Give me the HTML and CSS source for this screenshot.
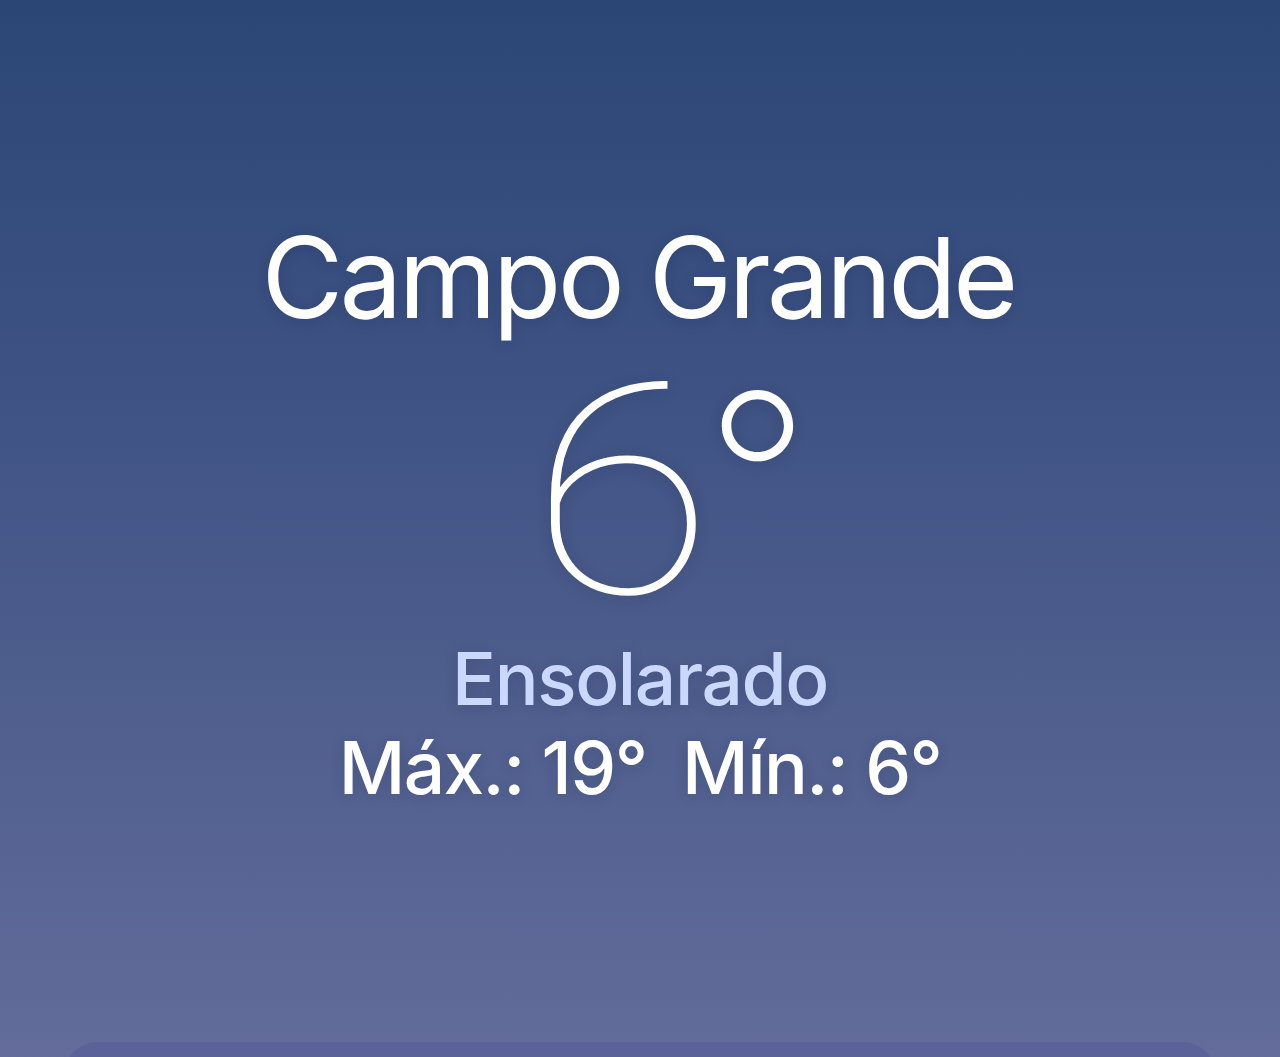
FILE: index.html
```html
<!DOCTYPE html>
<html lang="pt-BR">
<head>
    <meta charset="UTF-8">
    <meta name="viewport" content="width=device-width, initial-scale=1.0">
    <title>Tempo - Campo Grande</title>
    <link rel="stylesheet" href="styles.css">
</head>
<body>
    <div class="screen">
        <header class="current">
            <h1 class="city">Campo Grande</h1>
            <div class="temp"><span class="digits">6</span><span class="deg">°</span></div>
            <div class="condition">Ensolarado</div>
            <div class="hilo">Máx.: 19°&nbsp; Mín.: 6°</div>
        </header>

        <section class="card"></section>
    </div>
</body>
</html>
```

FILE: styles.css
```css
body { margin: 0; font-family: Inter, "Noto Sans", sans-serif; color: #fff; background: #2b4675; }
.screen { height: 1057px; overflow: hidden; display: flex; flex-direction: column; align-items: center; background: linear-gradient(180deg, #2b4675 0%, #3d5283 35%, #51608f 70%, #636c9b 100%); }
.current { display: flex; flex-direction: column; align-items: center; padding-top: 221px; text-shadow: 0 2px 14px rgba(20, 30, 60, 0.18); }
.city { margin: 0; font-size: 112px; font-weight: 400; line-height: 1; letter-spacing: -3.8px; padding-right: 4px; }
.temp { margin-top: 13px; display: flex; align-items: flex-start; padding-left: 60px; }
.digits { display: inline-block; font-family: Roboto, sans-serif; font-size: 294px; font-weight: 100; line-height: 1; transform: scaleX(1.14); transform-origin: left center; margin-right: 18px; }
.deg { margin-top: 15px; margin-left: -4px; font-size: 232px; font-weight: 220; line-height: 1; }
.condition { margin-top: 2px; font-size: 73px; font-weight: 500; line-height: 1; letter-spacing: -1.4px; color: #c9d8fb; }
.hilo { margin-top: 16px; font-size: 73px; font-weight: 500; line-height: 1; letter-spacing: -1.6px; }
.card { margin-top: 238px; width: 1150px; height: 200px; flex-shrink: 0; border-radius: 32px; background: #5a6299; }
```
